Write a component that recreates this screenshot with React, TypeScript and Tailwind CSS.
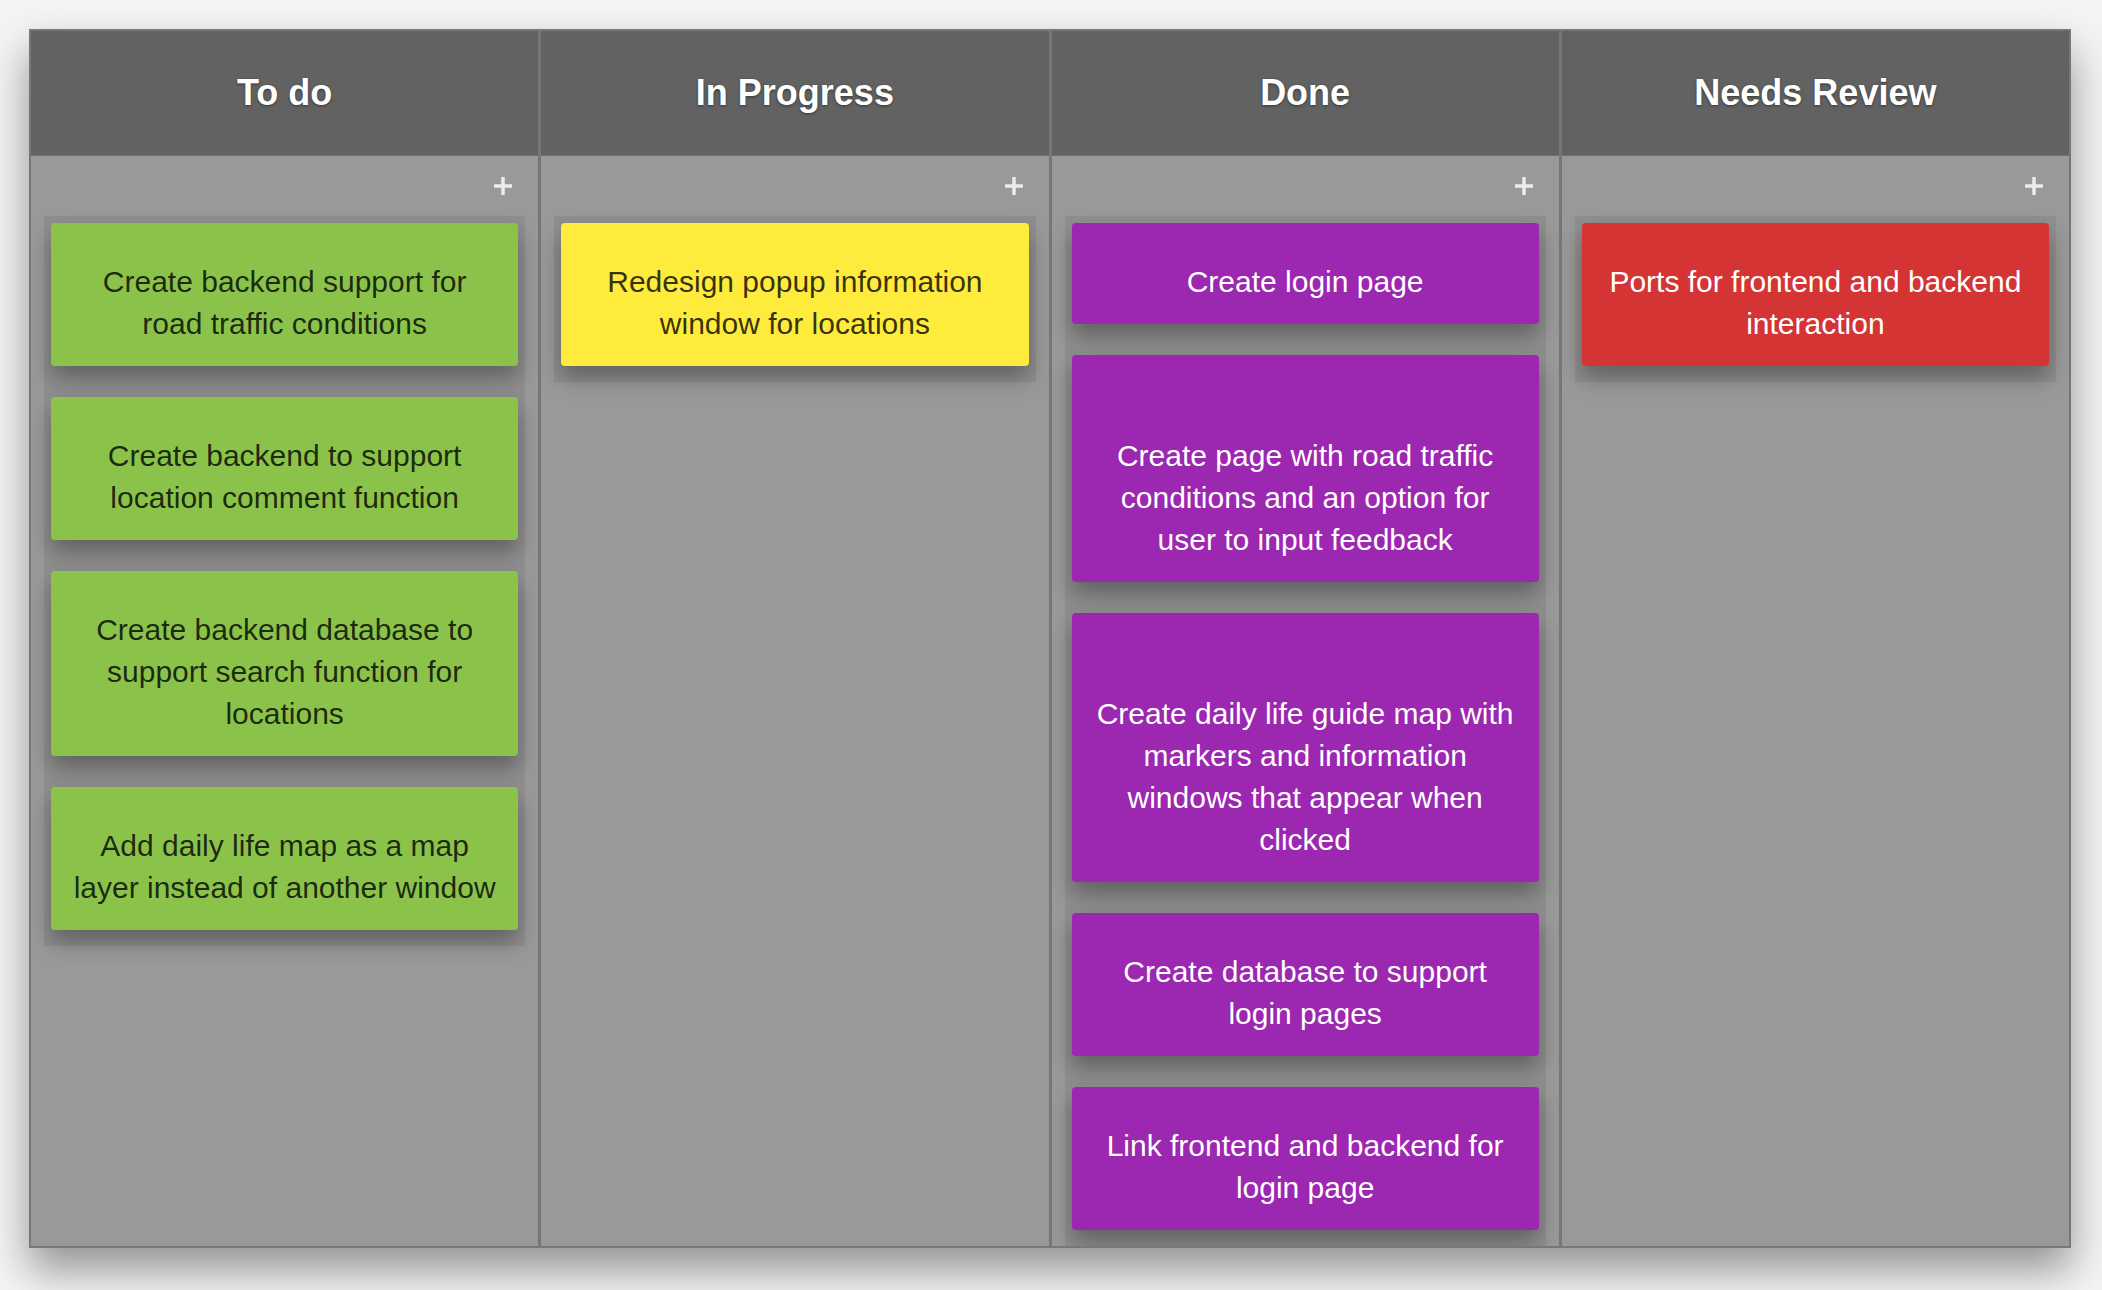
import React from "react";

type Task = {
  id: number;
  text: string;
  lead?: boolean;
};

type Column = {
  title: string;
  card: string;
  tasks: Task[];
};

const columns: Column[] = [
  {
    title: "To do",
    card: "bg-[#8bc34a] text-black/80",
    tasks: [
      { id: 1, text: "Create backend support for road traffic conditions" },
      { id: 2, text: "Create backend to support location comment function" },
      { id: 3, text: "Create backend database to support search function for locations" },
      { id: 4, text: "Add daily life map as a map layer instead of another window" },
    ],
  },
  {
    title: "In Progress",
    card: "bg-[#ffeb3b] text-black/80",
    tasks: [{ id: 5, text: "Redesign popup information window for locations" }],
  },
  {
    title: "Done",
    card: "bg-[#9c27b0] text-white",
    tasks: [
      { id: 6, text: "Create login page" },
      {
        id: 7,
        text: "Create page with road traffic conditions and an option for user to input feedback",
        lead: true,
      },
      {
        id: 8,
        text: "Create daily life guide map with markers and information windows that appear when clicked",
        lead: true,
      },
      { id: 9, text: "Create database to support login pages" },
      { id: 10, text: "Link frontend and backend for login page" },
    ],
  },
  {
    title: "Needs Review",
    card: "bg-[#d53434] text-white",
    tasks: [{ id: 11, text: "Ports for frontend and backend interaction" }],
  },
];

const PlusIcon = () => (
  <svg width="20" height="20" viewBox="0 0 20 20" className="text-[#ececec]">
    <path d="M10 1v18M1 10h18" stroke="currentColor" strokeWidth="3.5" />
  </svg>
);

const BoardColumn = ({ column, last }: { column: Column; last: boolean }) => {
  return (
    <div
      className={`flex flex-col flex-1 min-w-0 ${
        last ? "" : "border-r-[3px] border-[#767676]"
      }`}
    >
      {/* column title */}
      <div className="h-[125px] shrink-0 flex items-center justify-center bg-[#626262] border-b border-[#707070]">
        <h2 className="text-[36px] font-bold text-white [text-shadow:0_1px_3px_rgba(0,0,0,0.45)]">
          {column.title}
        </h2>
      </div>

      <div className="flex-1 bg-[#999999] px-[13px] overflow-hidden">
        <div className="h-[60px] flex items-center justify-end pr-[12px]">
          <PlusIcon />
        </div>

        <div className="flex flex-col gap-[31px] bg-[#8f8f8f] px-[7px] pt-[7px] pb-[16px]">
          {column.tasks.map((task) => (
            <div
              key={task.id}
              className={`${column.card} rounded-[4px] px-[22px] pt-[38px] pb-[21px] text-center text-[30px] leading-[42px] shadow-[0_12px_22px_rgba(0,0,0,0.32)]`}
            >
              {task.lead ? <br /> : null}
              {task.text}
            </div>
          ))}
        </div>
      </div>
    </div>
  );
};

const App = () => {
  return (
    <div
      className="w-[2102px] h-[1290px] bg-[#f4f4f4] pt-[29px] pl-[29px]"
      style={{ fontFamily: '"Liberation Sans", Arial, sans-serif' }}
    >
      <div className="flex w-[2042px] h-[1219px] border-2 border-[#777777] shadow-[0_22px_40px_rgba(0,0,0,0.4)]">
        {columns.map((column, i) => (
          <BoardColumn
            key={column.title}
            column={column}
            last={i === columns.length - 1}
          />
        ))}
      </div>
    </div>
  );
};

export default App;
